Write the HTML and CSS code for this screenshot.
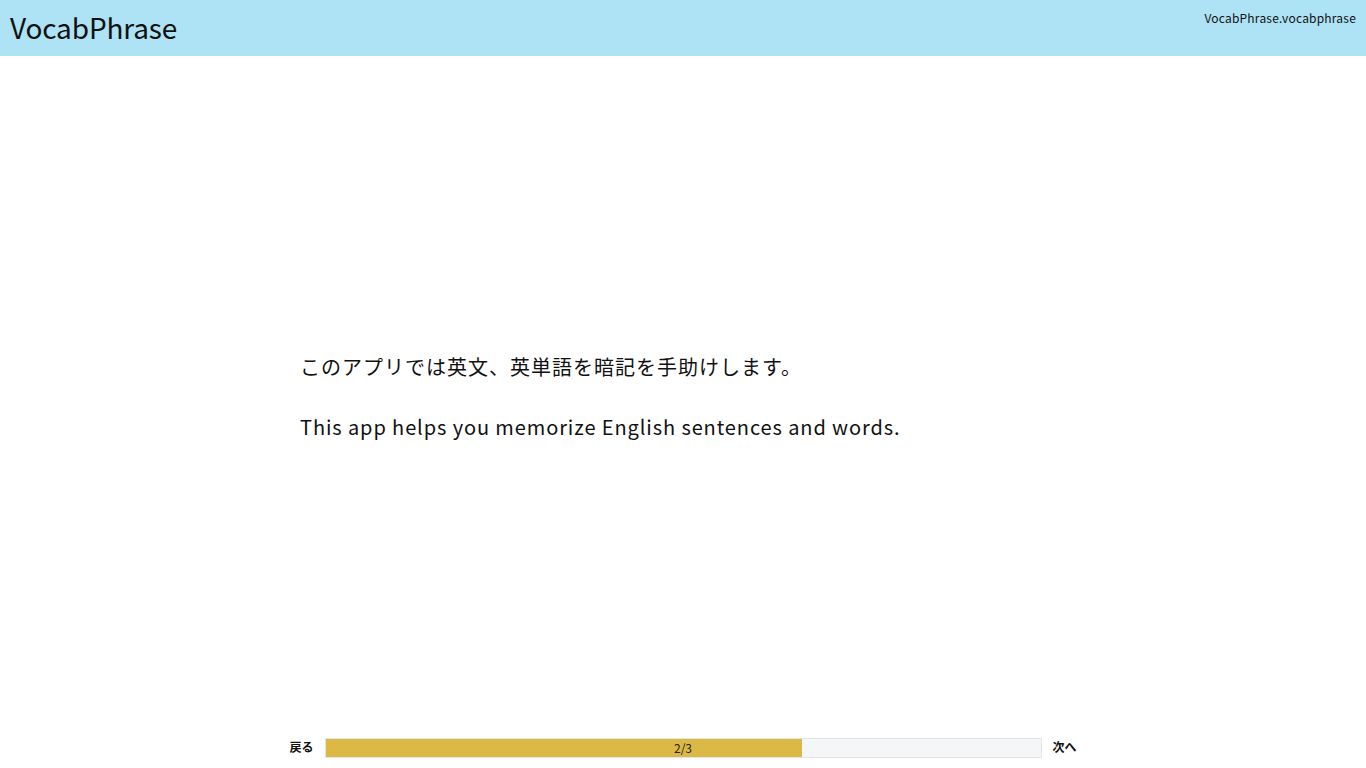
FILE: index.html
```html
<!DOCTYPE html>
<html lang="ja">
<head>
<meta charset="utf-8">
<title>VocabPhrase</title>
<link rel="stylesheet" href="styles.css">
</head>
<body>
<div class="app">
  <header class="header">
    <h1 class="title">VocabPhrase</h1>
    <div class="bundle">VocabPhrase.vocabphrase</div>
  </header>
  <main class="main">
    <div class="content">
      <p class="line">このアプリでは英文、英単語を暗記を手助けします。</p>
      <p class="line en">This app helps you memorize English sentences and words.</p>
    </div>
  </main>
  <footer class="footer">
    <button class="nav">戻る</button>
    <div class="progress">
      <div class="fill" style="width: 66.667%"></div>
      <span class="count">2/3</span>
    </div>
    <button class="nav">次へ</button>
  </footer>
</div>
</body>
</html>
```
FILE: styles.css
```css
* { box-sizing: border-box; }
html, body { margin: 0; padding: 0; }
body {
  font-family: "Noto Sans CJK JP", "Noto Sans", sans-serif;
  color: #111;
  background: #fff;
}
.app {
  height: 768px;
  display: flex;
  flex-direction: column;
}
.header {
  height: 56px;
  flex: none;
  background: #aee2f5;
  display: flex;
  justify-content: space-between;
  align-items: flex-start;
  padding: 0 10px;
}
.title {
  margin: 0;
  font-size: 28px;
  font-weight: 400;
  letter-spacing: -0.15px;
  line-height: 54px;
}
.bundle {
  font-size: 12px;
  letter-spacing: 0.2px;
  padding-top: 10px;
  line-height: 16px;
}
.main {
  flex: 1;
  display: flex;
  align-items: center;
  justify-content: center;
}
.content {
  width: 766px;
  margin-top: 1px;
}
.line {
  margin: 0 0 30px;
  font-size: 20px;
  line-height: 30px;
  letter-spacing: 0.05em;
}
.line.en { letter-spacing: 0.9px; }
.line:last-child { margin-bottom: 0; }
.footer {
  flex: none;
  display: flex;
  align-items: center;
  justify-content: center;
  gap: 11px;
  padding-bottom: 10px;
}
.nav {
  border: 0;
  background: none;
  padding: 0 0 2px;
  font-family: inherit;
  font-size: 12px;
  font-weight: 700;
  color: #111;
  line-height: 19px;
}
.progress {
  position: relative;
  width: 717px;
  height: 20px;
  background: #f4f6f8;
  border: 1px solid #e2e4e6;
  overflow: hidden;
}
.fill {
  height: 100%;
  background: #dbb944;
}
.count {
  position: absolute;
  inset: 0;
  display: flex;
  align-items: center;
  justify-content: center;
  font-size: 12px;
  color: #222;
}
```
